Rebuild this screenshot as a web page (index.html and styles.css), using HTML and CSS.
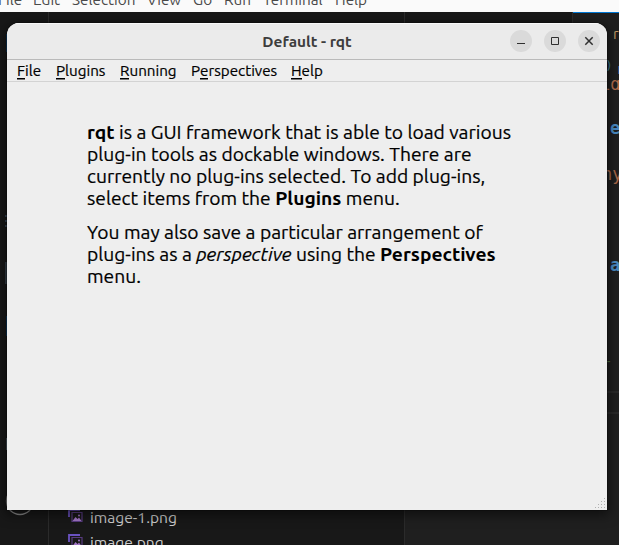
FILE: index.html
```
<!DOCTYPE html>
<html lang="en">
<head>
<meta charset="utf-8">
<title>Default - rqt</title>
<link rel="stylesheet" href="styles.css">
</head>
<body>
<div class="desktop">
  <nav class="editor-menu"><span>File</span><span>Edit</span><span>Selection</span><span>View</span><span>Go</span><span>Run</span><span>Terminal</span><span>Help</span></nav>
  <div class="workbench">
    <aside class="activity">
      <i class="mark mark-active"></i><i class="mark mark-dots"></i><i class="mark mark-box"></i><i class="mark mark-blue"></i><i class="mark mark-account"></i>
      <svg class="gear" width="30" height="30" viewBox="0 0 30 30"><circle cx="15" cy="15" r="13.5"/></svg>
    </aside>
    <aside class="explorer">
      <div class="file"><svg class="pic" width="16" height="14" viewBox="0 0 16 14"><path class="back" d="M1 8V1h11"/><path class="frame" d="M4 3.5h10v9H4z"/><path class="hill" d="M4.500 12l3-4 2 2 1.500-1.500 2.500 3.500z"/><circle class="hill" cx="11" cy="6.500" r="1"/></svg><span>image-1.png</span></div>
      <div class="file"><svg class="pic" width="16" height="14" viewBox="0 0 16 14"><path class="back" d="M1 8V1h11"/><path class="frame" d="M4 3.5h10v9H4z"/><path class="hill" d="M4.500 12l3-4 2 2 1.500-1.500 2.500 3.500z"/><circle class="hill" cx="11" cy="6.500" r="1"/></svg><span>image.png</span></div>
    </aside>
    <main class="editor">
      <div class="tabstrip"></div>
      <div class="panel-line line-a"></div>
      <div class="panel-line line-b"></div>
      <span class="code c-tab">r</span>
      <span class="code c-ring">)</span>
      <span class="code c-crumb">r</span>
      <div class="code c-id"><span>id</span></div>
      <span class="code c-e">e</span>
      <span class="code c-my">ny</span>
      <span class="code c-a">a</span>
      <span class="code c-dash">-</span>
    </main>
  </div>

  <section class="window">
    <header class="titlebar">
      <h1>Default - rqt</h1>
      <div class="controls">
        <button aria-label="Minimize"><svg width="22" height="22" viewBox="0 0 22 22"><path d="M7 13.5h8"/></svg></button>
        <button aria-label="Maximize"><svg width="22" height="22" viewBox="0 0 22 22"><path d="M7.5 7.5h7v7h-7z"/></svg></button>
        <button aria-label="Close"><svg width="22" height="22" viewBox="0 0 22 22"><path class="cross" d="M7.3 7.3l7.4 7.4M14.7 7.3l-7.4 7.4"/></svg></button>
      </div>
    </header>
    <nav class="menubar"><span><u>F</u>ile</span><span><u>P</u>lugins</span><span><u>R</u>unning</span><span>P<u>e</u>rspectives</span><span><u>H</u>elp</span></nav>
    <div class="content">
      <p><span><b>rqt</b> is a GUI framework that is able to load various</span>
      <span>plug-in tools as dockable windows. There are</span>
      <span>currently no plug-ins selected. To add plug-ins,</span>
      <span>select items from the <b>Plugins</b> menu.</span></p>
      <p><span>You may also save a particular arrangement of</span>
      <span>plug-ins as a <em>perspective</em> using the <b>Perspectives</b></span>
      <span>menu.</span></p>
    </div>
    <svg class="grip" width="11" height="11" viewBox="0 0 11 11"><path d="M9 0h1v1H9zM6 3h1v1H6zM9 3h1v1H9zM3 6h1v1H3zM6 6h1v1H6zM9 6h1v1H9zM0 9h1v1H0zM3 9h1v1H3zM6 9h1v1H6zM9 9h1v1H9z"/></svg>
  </section>
</div>
</body>
</html>
```
FILE: styles.css
```
* { box-sizing: border-box; }
body { margin: 0; width: 619px; height: 545px; overflow: hidden; font-family: Ubuntu, "Noto Sans", sans-serif; }
.desktop { position: relative; width: 619px; height: 545px; overflow: hidden; display: flex; flex-direction: column; background: #181818; }
.editor-menu { height: 12px; flex: none; background: #fafafa; color: #4a4a4a; display: grid; grid-template-columns: 35px 39px 75px 46px 31px 39px 72px 60px; font-size: 15.3px; line-height: 20px; overflow: hidden; }
.editor-menu span { margin-top: -10px; margin-left: -2px; white-space: nowrap; }
.workbench { flex: 1; display: flex; min-height: 0; }
.activity { position: relative; width: 49px; border-right: 1px solid #2b2b2b; }
.mark { position: absolute; left: 6px; width: 1px; background: #0c3c66; }
.mark-active { top: 22px; height: 18px; }
.mark-dots { top: 203px; left: 5px; width: 2px; height: 12px; background: repeating-linear-gradient(#344454 0 2px, transparent 2px 5px); }
.mark-box { top: 250px; left: 5px; width: 2px; height: 22px; background: #343e46; }
.mark-blue { top: 304px; height: 20px; }
.mark-account { top: 426px; height: 12px; background: #52606a; }
.gear { position: absolute; left: 5px; top: 474px; }
.gear circle { fill: none; stroke: #888; stroke-width: 1.3; }
.explorer { width: 356px; border-right: 1px solid #2b2b2b; padding: 492px 0 0 19px; }
.file { display: flex; align-items: center; gap: 6px; height: 25px; color: #ccc; font-size: 15.6px; line-height: 22px; }
.pic { flex: none; margin-top: -1px; }
.pic path { fill: none; }
.back { stroke: #6a52c0; stroke-width: 1.8; }
.frame { stroke: #583b80; stroke-width: 1.2; }
.pic .hill { fill: #a074c4; }
.editor { position: relative; flex: 1; background: #1f1f1f; overflow: hidden; }
.tabstrip { height: 60px; background: linear-gradient(#0078d4, #0078d4) 168px 0 / 46px 1px no-repeat, linear-gradient(90deg, #181818 167px, #2b2b2b 167px 168px, #1f1f1f 168px); }
.panel-line { position: absolute; left: 0; right: 0; height: 2px; background: #292929; }
.line-a { top: 379px; }
.line-b { top: 400px; }
.code { position: absolute; font: 17px/22px "DejaVu Sans Mono", monospace; white-space: nowrap; }
.c-tab { left: 208px; top: 11px; color: #c49a66; font-family: Ubuntu, "Noto Sans"; font-size: 15px; }
.c-ring { left: 200px; top: 43px; color: #3b7b8e; font-size: 13px; }
.c-crumb { left: 211px; top: 46px; color: #3b6f9e; font-size: 14px; }
.c-id { left: 195px; top: 68px; height: 16px; overflow: hidden; color: #b5704e; }
.c-id span { display: block; margin-top: -7px; }
.c-e { left: 205px; top: 105px; color: #4a8cc6; font-weight: bold; }
.c-my { left: 197px; top: 151px; color: #a8684a; }
.c-a { left: 205px; top: 242px; color: #4a8cc6; font-weight: bold; }
.c-dash { left: 199px; top: 338px; color: #4e6942; font-size: 14px; }

.window { position: absolute; left: 7px; top: 23px; width: 600px; height: 487px; background: #eee; border-radius: 12px 12px 0 0; box-shadow: 0 3px 12px 2px rgba(0,0,0,.5), 0 0 0 1px rgba(0,0,0,.2); overflow: hidden; display: flex; flex-direction: column; color: #000; }
.titlebar { position: relative; height: 37px; flex: none; background: #ebebeb; border-bottom: 1px solid #bababa; box-shadow: inset 0 1px #f8f8f8; display: flex; align-items: center; justify-content: center; }
.titlebar h1 { margin: 1px 0 0; font-size: 15.4px; line-height: 20px; color: #3d3d3d; font-weight: 700; white-space: nowrap; }
.controls { position: absolute; right: 7px; top: 7px; display: flex; gap: 12px; }
.controls button { width: 22px; height: 22px; border: 0; padding: 0; border-radius: 50%; background: #dadada; }
.controls svg { display: block; }
.controls path { fill: none; stroke: #303030; stroke-width: 1; }
.controls .cross { stroke-width: 1.5; }
.menubar { height: 22px; flex: none; border-bottom: 1px solid #d3d3d3; display: grid; grid-template-columns: 39px 64px 71px 100px 60px; padding-left: 10px; font-size: 15.2px; line-height: 22px; white-space: nowrap; -webkit-text-stroke: 0.2px #000; }
.menubar u { text-decoration: none; box-shadow: 0 1.5px #000; display: inline-block; height: 18px; line-height: 22px; }
.content { padding: 39px 80px 0; font-size: 19.24px; line-height: 22px; -webkit-text-stroke: 0.2px #000; }
.content b { -webkit-text-stroke: 0; }
.content p { margin: 0 0 12px; }
.content p > span { display: block; white-space: nowrap; }
.grip { position: absolute; right: 1px; bottom: 1px; fill: #b0b0b0; }
```
